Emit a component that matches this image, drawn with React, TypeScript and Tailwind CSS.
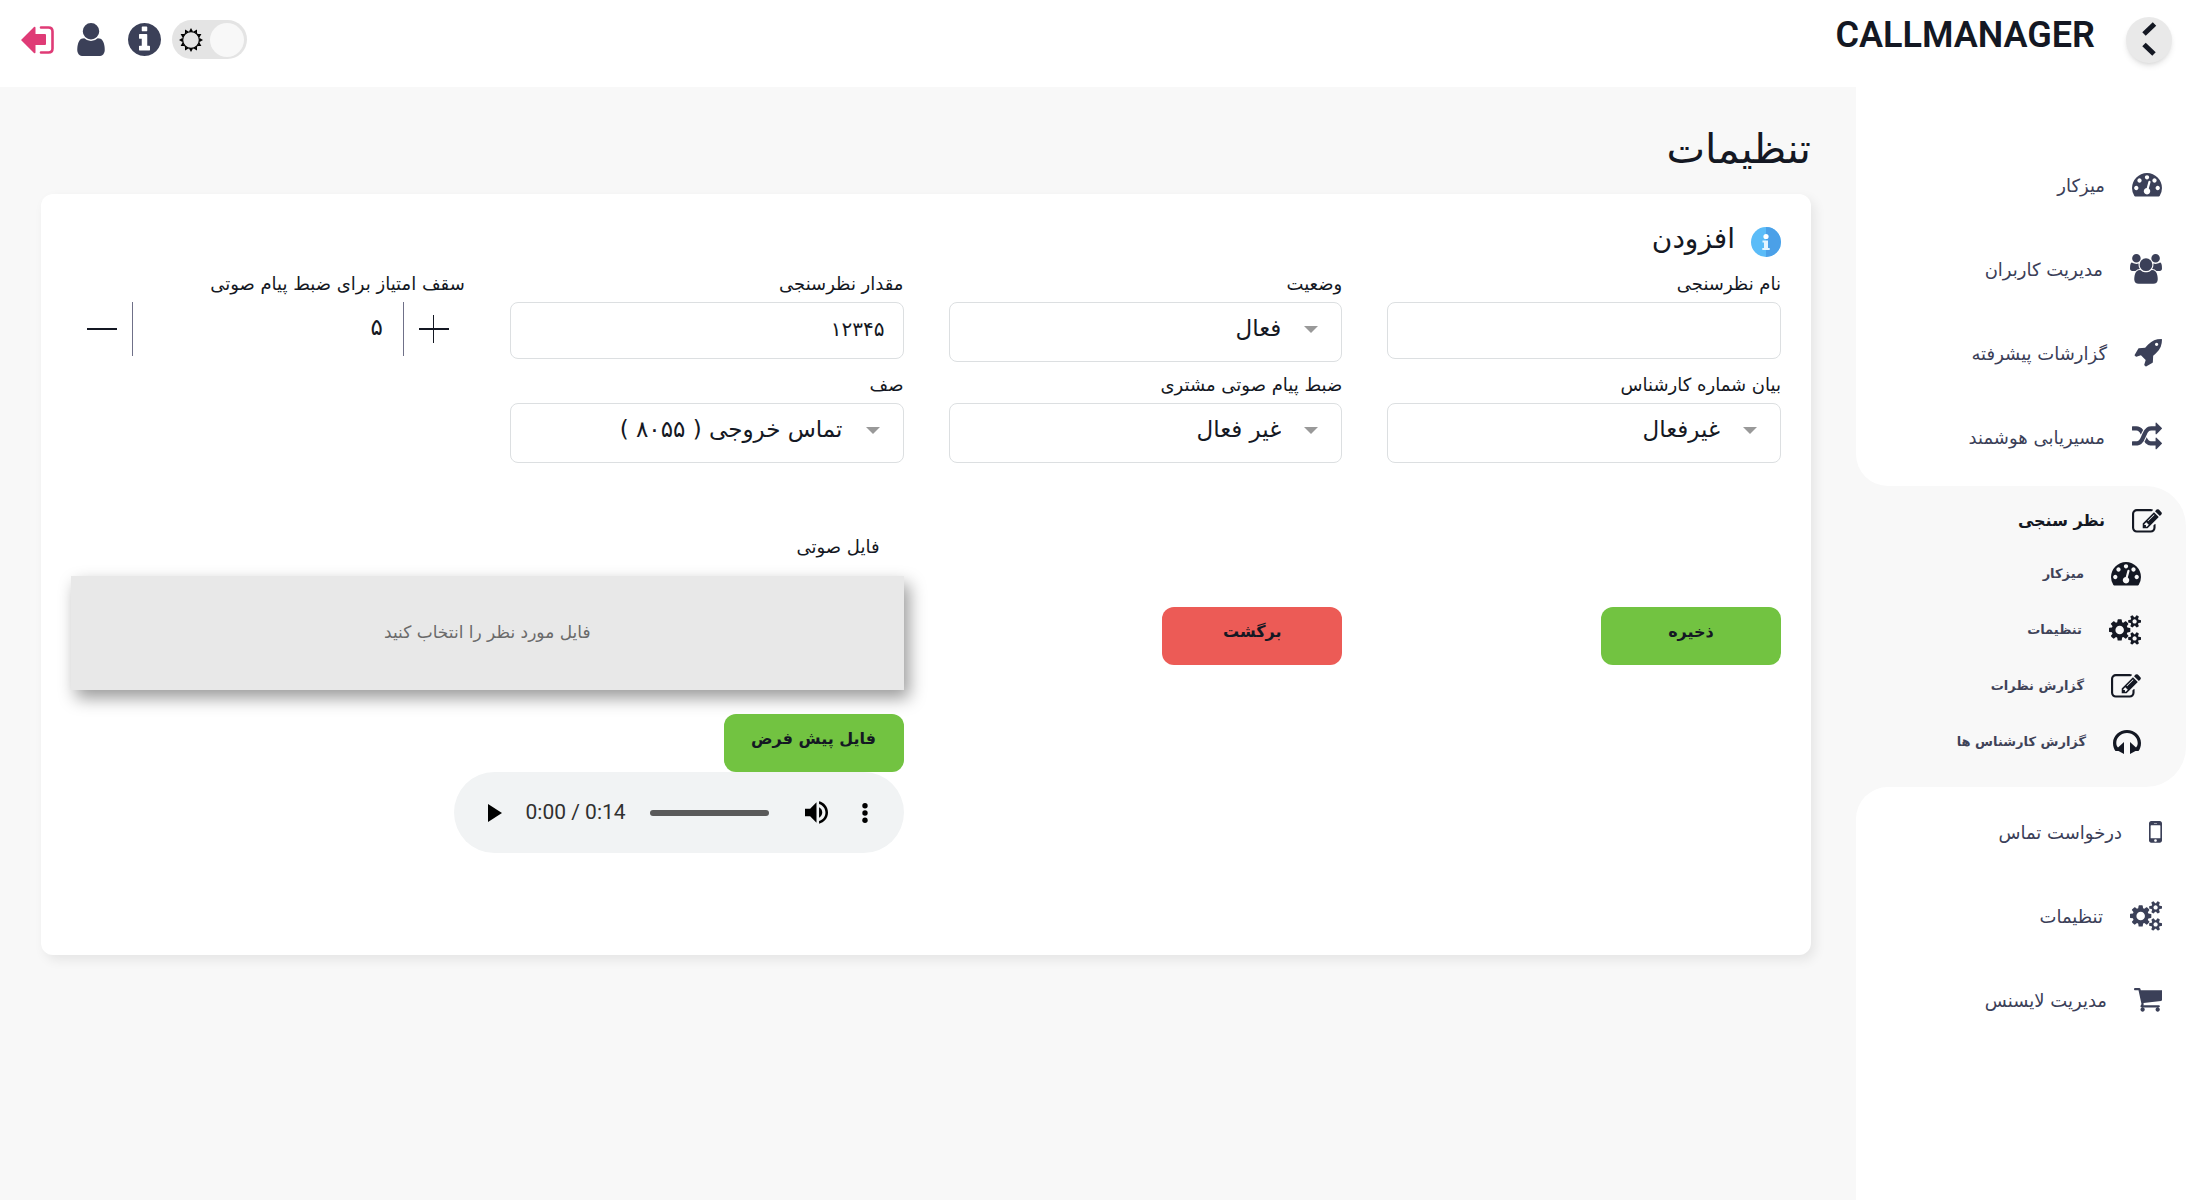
import { ReactNode, useState } from 'react';
import { clsx } from 'clsx';

type TIcon = { viewBox: string; d: string };

const icons = {
  dashboard: {
    viewBox: '0 256 1792 1408',
    d: 'M384 1152q0-53-37.5-90.5t-90.5-37.5-90.5 37.5-37.5 90.5 37.5 90.5 90.5 37.5 90.5-37.5 37.5-90.5zm192-448q0-53-37.5-90.5t-90.5-37.5-90.5 37.5-37.5 90.5 37.5 90.5 90.5 37.5 90.5-37.5 37.5-90.5zm428 481l101-382q6-26-7.5-48.5t-38.5-29.5-48 6.5-30 39.5l-101 382q-60 5-107 43.5t-63 98.5q-20 77 20 146t117 89 146-20 89-117q16-60-6-117t-72-91zm660-33q0-53-37.5-90.5t-90.5-37.5-90.5 37.5-37.5 90.5 37.5 90.5 90.5 37.5 90.5-37.5 37.5-90.5zm-640-640q0-53-37.5-90.5t-90.5-37.5-90.5 37.5-37.5 90.5 37.5 90.5 90.5 37.5 90.5-37.5 37.5-90.5zm448 192q0-53-37.5-90.5t-90.5-37.5-90.5 37.5-37.5 90.5 37.5 90.5 90.5 37.5 90.5-37.5 37.5-90.5zm320 448q0 261-141 483-19 29-54 29h-1402q-35 0-54-29-141-221-141-483 0-182 71-348t191-286 286-191 348-71 348 71 286 191 191 286 71 348z',
  },
  users: {
    viewBox: '-64 0 1920 1792',
    d: 'M529 896q-162 5-265 128h-134q-82 0-138-40.5t-56-118.5q0-353 124-353 6 0 43.5 21t97.5 42.5 119 21.5q67 0 133-23-5 37-5 66 0 139 81 256zm1071 637q0 120-73 189.5t-194 69.5h-874q-121 0-194-69.5t-73-189.5q0-53 3.5-103.5t14-109 26.5-108.5 43-97.5 62-81 85.5-53.5 111.5-20q10 0 43 21.5t73 48 107 48 135 21.5 135-21.5 107-48 73-48 43-21.5q61 0 111.5 20t85.5 53.5 62 81 43 97.5 26.5 108.5 14 109 3.5 103.5zm-1024-1277q0 106-75 181t-181 75-181-75-75-181 75-181 181-75 181 75 75 181zm704 384q0 159-112.5 271.5t-271.5 112.5-271.5-112.5-112.5-271.5 112.5-271.5 271.5-112.5 271.5 112.5 112.5 271.5zm576 225q0 78-56 118.5t-138 40.5h-134q-103-123-265-128 81-117 81-256 0-29-5-66 66 23 133 23 59 0 119-21.5t97.5-42.5 43.5-21q124 0 124 353zm-128-609q0 106-75 181t-181 75-181-75-75-181 75-181 181-75 181 75 75 181z',
  },
  rocket: {
    viewBox: '0 128 1664 1664',
    d: 'M1440 448q0-40-28-68t-68-28-68 28-28 68 28 68 68 28 68-28 28-68zm224-288q0 249-75.5 430.5t-253.5 360.5q-81 80-195 176l-20 379q-2 16-16 26l-384 224q-7 4-16 4-12 0-23-9l-64-64q-13-14-8-32l85-276-281-281-276 85q-3 1-9 1-14 0-23-9l-64-64q-17-19-5-39l224-384q10-14 26-16l379-20q96-114 176-195 188-187 358-258t431-71q14 0 24 9.5t10 22.5z',
  },
  random: {
    viewBox: '0 0 1792 1792',
    d: 'M666 481q-60 92-137 273-22-45-37-72.5t-40.5-63.5-51-56.5-63-35-81.5-14.5h-224q-14 0-23-9t-9-23v-192q0-14 9-23t23-9h224q250 0 410 225zm1126 799q0 14-9 23l-320 320q-9 9-23 9-13 0-22.5-9.5t-9.5-22.5v-192q-32 0-85 .5t-81 1-73-1-71-5-64-10.5-63-18.5-58-28.5-59-40-55-53.5-56-69.5q59-93 136-273 22 45 37 72.5t40.5 63.5 51 56.5 63 35 81.5 14.5h256v-192q0-14 9-23t23-9q12 0 24 10l319 319q9 9 9 23zm0-896q0 14-9 23l-320 320q-9 9-23 9-13 0-22.5-9.5t-9.5-22.5v-192h-256q-48 0-87 15t-69 45-51 61.5-45 77.5q-32 62-78 171-29 66-49.5 111t-54 105-64 100-74 83-90 68.5-106.5 42-128 16.5h-224q-14 0-23-9t-9-23v-192q0-14 9-23t23-9h224q48 0 87-15t69-45 51-61.5 45-77.5q32-62 78-171 29-66 49.5-111t54-105 64-100 74-83 90-68.5 106.5-42 128-16.5h256v-192q0-14 9-23t23-9q12 0 24 10l319 319q9 9 9 23z',
  },
  edit: {
    viewBox: '0 128 1792 1408',
    d: 'M888 1184l116-116-152-152-116 116v56h96v96h56zm440-720q-16-16-33 1l-350 350q-17 17-1 33t33-1l350-350q17-17 1-33zm80 594v190q0 119-84.5 203.5t-203.5 84.5h-832q-119 0-203.5-84.5t-84.5-203.5v-832q0-119 84.5-203.5t203.5-84.5h832q63 0 117 25 15 7 18 23 3 17-9 29l-49 49q-14 14-32 8-23-6-45-6h-832q-66 0-113 47t-47 113v832q0 66 47 113t113 47h832q66 0 113-47t47-113v-126q0-13 9-22l64-64q15-15 35-7t20 29zm-96-738l288 288-672 672h-288v-288zm444 132l-92 92-288-288 92-92q28-28 68-28t68 28l152 152q28 28 28 68t-28 68z',
  },
  cogs: {
    viewBox: '-64 0 1920 1792',
    d: 'M832 896q0-106-75-181t-181-75-181 75-75 181 75 181 181 75 181-75 75-181zm768 512q0-52-38-90t-90-38-90 38-38 90q0 53 37.5 90.5t90.5 37.5 90.5-37.5 37.5-90.5zm0-1024q0-52-38-90t-90-38-90 38-38 90q0 53 37.5 90.5t90.5 37.5 90.5-37.5 37.5-90.5zm-384 421v185q0 10-7 19.5t-16 10.5l-155 24q-11 35-32 76 34 48 90 115 7 11 7 20 0 12-7 19-23 30-82.5 89.5t-78.5 59.5q-11 0-21-7l-115-90q-37 19-77 31-11 108-23 155-7 24-30 24h-186q-11 0-20-7.5t-10-17.5l-23-153q-34-10-75-31l-118 89q-7 7-20 7-11 0-21-8-144-133-144-160 0-9 7-19 10-14 41-53t47-61q-23-44-35-82l-152-24q-10-1-17-9.5t-7-19.5v-185q0-10 7-19.5t16-10.5l155-24q11-35 32-76-34-48-90-115-7-11-7-20 0-12 7-20 22-30 82-89t79-59q11 0 21 7l115 90q34-18 77-32 11-108 23-154 7-24 30-24h186q11 0 20 7.5t10 17.5l23 153q34 10 75 31l118-89q8-7 20-7 11 0 21 8 144 133 144 160 0 8-7 19-12 16-42 54t-45 60q23 48 34 82l152 23q10 2 17 10.5t7 19.5zm640 533v140q0 16-149 31-12 27-30 52 51 113 51 138 0 4-4 7-122 71-124 71-8 0-46-47t-52-68q-20 2-30 2t-30-2q-14 21-52 68t-46 47q-2 0-124-71-4-3-4-7 0-25 51-138-18-25-30-52-149-15-149-31v-140q0-16 149-31 13-29 30-52-51-113-51-138 0-4 4-7 4-2 35-20t59-34 30-16q8 0 46 46.5t52 67.5q20-2 30-2t30 2q51-71 92-112l6-2q4 0 124 70 4 3 4 7 0 25-51 138 17 23 30 52 149 15 149 31zm0-1024v140q0 16-149 31-12 27-30 52 51 113 51 138 0 4-4 7-122 71-124 71-8 0-46-47t-52-68q-20 2-30 2t-30-2q-14 21-52 68t-46 47q-2 0-124-71-4-3-4-7 0-25 51-138-18-25-30-52-149-15-149-31v-140q0-16 149-31 13-29 30-52-51-113-51-138 0-4 4-7 4-2 35-20t59-34 30-16q8 0 46 46.5t52 67.5q20-2 30-2t30 2q51-71 92-112l6-2q4 0 124 70 4 3 4 7 0 25-51 138 17 23 30 52 149 15 149 31z',
  },
  headphones: {
    viewBox: '0 0 28 24',
    d: 'M14 0C6.300 0 0 5.800 0 13C0 16.500 1 19 2.500 21H5.500L11 24V12L5 17.500C3.800 16.500 3.300 14.500 3.300 13C3.300 7.500 8 3 14 3S24.700 7.500 24.700 13C24.700 14.500 24.200 16.500 23 17.500L17 12V24L22.500 21H25.500C27 19 28 16.500 28 13C28 5.800 21.700 0 14 0z',
  },
  mobile: {
    viewBox: '512 256 768 1280',
    d: 'M976 1408q0-33-23.5-56.5t-56.5-23.5-56.5 23.5-23.5 56.5 23.5 56.5 56.5 23.5 56.5-23.5 23.5-56.5zm208-160v-704q0-13-9.5-22.5t-22.5-9.5h-512q-13 0-22.5 9.5t-9.5 22.5v704q0 13 9.5 22.5t22.5 9.5h512q13 0 22.5-9.5t9.5-22.5zm-192-848q0-16-16-16h-160q-16 0-16 16t16 16h160q16 0 16-16zm288-16v1024q0 52-38 90t-90 38h-512q-52 0-90-38t-38-90v-1024q0-52 38-90t90-38h512q52 0 90 38t38 90z',
  },
  cart: {
    viewBox: '64 256 1664 1408',
    d: 'M704 1536q0 52-38 90t-90 38-90-38-38-90 38-90 90-38 90 38 38 90zm896 0q0 52-38 90t-90 38-90-38-38-90 38-90 90-38 90 38 38 90zm128-1144v576q0 20-16 38t-41 21l-1044 122q13 60 13 70 0 16-24 64h920q26 0 45 19t19 45-19 45-45 19h-1024q-26 0-45-19t-19-45q0-11 8-31.500t16-36 21.500-40 15.500-29.500l-177-823h-204q-26 0-45-19t-19-45 19-45 45-19h256q16 0 28.500 6.500t19.500 15.500 13 24.500 8 26 5.500 29.500 4.500 26h1240q24 0 24 -16z',
  },
  user: {
    viewBox: '256 128 1280 1536',
    d: 'M1536 1399q0 109-62.500 187t-150.500 78h-854q-88 0-150.500-78t-62.500-187q0-85 8.500-160.500t31.500-152 58.500-131 94-89 134.500-34.500q131 128 313 128t313-128q76 0 134.500 34.500t94 89 58.500 131 31.500 152 8.500 160.500zm-256-887q0 159-112.500 271.500t-271.500 112.500-271.500-112.500-112.500-271.500 112.500-271.500 271.500-112.500 271.500 112.500 112.500 271.500z',
  },
  info: {
    viewBox: '128 128 1536 1536',
    d: 'M1152 1376v-160q0-14-9-23t-23-9h-96v-512q0-14-9-23t-23-9h-320q-14 0-23 9t-9 23v160q0 14 9 23t23 9h96v320h-96q-14 0-23 9t-9 23v160q0 14 9 23t23 9h448q14 0 23-9t9-23zm-128-896v-160q0-14-9-23t-23-9h-192q-14 0-23 9t-9 23v160q0 14 9 23t23 9h192q14 0 23-9t9-23zm640 416q0 209-103 385.500t-279.500 279.500-385.500 103-385.500-103-279.500-279.500-103-385.500 103-385.500 279.500-279.500 385.500-103 385.500 103 279.500 279.500 103 385.500z',
  },
} satisfies Record<string, TIcon>;

type TIconName = keyof typeof icons;

const Icon = ({ name, className }: { name: TIconName; className: string }) => (
  <svg
    viewBox={icons[name].viewBox}
    fill="currentColor"
    aria-hidden="true"
    className={clsx('shrink-0', className)}
  >
    <path d={icons[name].d} />
  </svg>
);

type TNavItem = { icon: TIconName; label: string; size: string };

const topNav: TNavItem[] = [
  { icon: 'dashboard', label: 'میزکار', size: 'w-[30px]' },
  { icon: 'users', label: 'مدیریت کاربران', size: 'w-[32px]' },
  { icon: 'rocket', label: 'گزارشات پیشرفته', size: 'w-[28px]' },
  { icon: 'random', label: 'مسیریابی هوشمند', size: 'w-[30px]' },
];

const surveyNav: TNavItem[] = [
  { icon: 'dashboard', label: 'میزکار', size: 'w-[30px]' },
  { icon: 'cogs', label: 'تنظیمات', size: 'w-[32px]' },
  { icon: 'edit', label: 'گزارش نظرات', size: 'w-[30px]' },
  { icon: 'headphones', label: 'گزارش کارشناس ها', size: 'w-[28px]' },
];

const bottomNav: TNavItem[] = [
  { icon: 'mobile', label: 'درخواست تماس', size: 'w-[13px]' },
  { icon: 'cogs', label: 'تنظیمات', size: 'w-[32px]' },
  { icon: 'cart', label: 'مدیریت لایسنس', size: 'w-[28px]' },
];

const NavLink = ({ icon, label, size }: TNavItem) => (
  <a
    href="#"
    className="flex h-[84px] items-center gap-[27px] pr-[35px] text-[18px] text-[#3b4058]"
  >
    <Icon name={icon} className={size} />
    {label}
  </a>
);

const Sidebar = () => (
  <aside className="flex w-[341px] shrink-0 flex-col">
    <nav className="flex flex-1 flex-col">
      <div className="rounded-bl-[32px] bg-white pt-[56px] pb-[7px]">
        {topNav.map((item) => (
          <NavLink key={item.label} {...item} />
        ))}
      </div>

      {/* Open section */}
      <div className="bg-white pr-[11px]">
        <div className="rounded-r-[40px] bg-[#f8f8f8] pt-[10px] pb-[17px]">
          <a
            href="#"
            className="flex h-[50px] items-center gap-[27px] pr-6 text-[16px] font-bold text-[#141823]"
          >
            <Icon name="edit" className="w-[30px]" />
            نظر سنجی
          </a>
          {surveyNav.map(({ icon, label, size }) => (
            <a
              key={label}
              href="#"
              className="flex h-14 items-center gap-[27px] pr-[45px] text-[13px] font-bold text-[#3f4358]"
            >
              <Icon name={icon} className={clsx(size, 'text-[#141823]')} />
              {label}
            </a>
          ))}
        </div>
      </div>

      <div className="flex-1 rounded-tl-[32px] bg-white pt-[3px]">
        {bottomNav.map((item) => (
          <NavLink key={item.label} {...item} />
        ))}
      </div>
    </nav>
  </aside>
);

const Header = () => {
  const [dark, setDark] = useState(false);

  return (
    <header className="flex h-[87px] items-start justify-between bg-white pt-[17px] pr-[25px] pl-[21px]">
      <div className="flex items-start gap-[31px]">
        <button
          aria-label="منو"
          className="flex size-[46px] items-center justify-center rounded-full bg-[#e9e9e9] shadow-md"
        >
          <svg viewBox="0 0 46 46" className="size-[46px]" fill="none" stroke="#141823" strokeWidth="5">
            <path d="M28.500 7L18 17M18 27.500L28 37" />
          </svg>
        </button>
        <h1 className="font-[Roboto,sans-serif] text-[36px] leading-9 font-semibold text-[#141823]" dir="ltr">
          CALLMANAGER
        </h1>
      </div>

      {/* Actions */}
      <div className="flex items-center pt-[3px] text-[#3b4058]" dir="ltr">
        <button aria-label="خروج" className="mr-[22px] text-[#df3b76]">
          <svg viewBox="0 0 33 28" className="h-7 w-[33px]" aria-hidden="true">
            <path d="M0 14L13 1Q14.500 0 14.500 2V8H24Q25 8 25 9V18Q25 19 24 19H14.500V26Q14.500 28 13 27z" fill="currentColor" />
            <path d="M20 1.500H27.500Q31.500 1.500 31.500 5.500V22.500Q31.500 26.500 27.500 26.500H20" fill="none" stroke="currentColor" strokeWidth="2.600" strokeLinecap="round" />
          </svg>
        </button>
        <button aria-label="کاربر" className="mr-[22px]">
          <Icon name="user" className="h-[33px] w-[30px]" />
        </button>
        <button aria-label="راهنما" className="mr-[11px]">
          <Icon name="info" className="size-[33px]" />
        </button>
        <label className="flex h-[39px] w-[75px] cursor-pointer items-center justify-between rounded-full bg-[#e4e4e4] pr-[3px] pl-[7px]">
          <input
            type="checkbox"
            className="sr-only"
            aria-label="حالت شب"
            checked={dark}
            onChange={() => setDark(!dark)}
          />
          <svg viewBox="-12 -12 24 24" className="size-6 text-black" aria-hidden="true">
            <circle r="8.400" fill="none" stroke="currentColor" strokeWidth="1.300" />
            {Array.from({ length: 12 }, (_, i) => (
              <path key={i} d="M-2-8.600L0-12L2-8.600z" fill="currentColor" transform={`rotate(${i * 30})`} />
            ))}
          </svg>
          <span className="size-[34px] rounded-full bg-[#f8f8f8]" />
        </label>
      </div>
    </header>
  );
};

type TField = { id: string; label: string; children: ReactNode };

const Field = ({ id, label, children }: TField) => (
  <div>
    <label htmlFor={id} className="block h-[33px] text-[18px] leading-[30px]">
      {label}
    </label>
    {children}
  </div>
);

const SelectField = ({ id, label, options }: { id: string; label: string; options: string[] }) => (
  <Field id={id} label={label}>
    <div className="relative">
      <select
        id={id}
        className="h-[60px] w-full appearance-none rounded-lg border border-[#dcdfe1] bg-white pr-[60px] pb-2 pl-4 text-[23px]"
      >
        {options.map((option) => (
          <option key={option}>{option}</option>
        ))}
      </select>
      <span className="pointer-events-none absolute top-6 right-6 border-x-[7px] border-t-[7px] border-x-transparent border-t-[#999]" />
    </div>
  </Field>
);

const button =
  'h-[58px] w-[180px] rounded-xl pb-2 text-[16px] font-bold text-[#141823]';

const AudioPlayer = () => (
  <div className="flex h-[81px] w-[450px] items-center rounded-full bg-[#f1f3f4] pr-9 pl-[34px] text-black" dir="ltr">
    <button aria-label="پخش" className="mr-6">
      <svg viewBox="0 0 14 18" className="h-[18px] w-[14px]">
        <path d="M0 0L14 9L0 18z" />
      </svg>
    </button>
    <span className="font-[Roboto,sans-serif] text-[21px] whitespace-nowrap text-[#303030]">0:00 / 0:14</span>
    <input
      type="range"
      aria-label="زمان"
      defaultValue={0}
      className="mx-6 h-[6px] min-w-0 flex-1 appearance-none rounded-full bg-[#5a5a5a] [&::-webkit-slider-thumb]:appearance-none"
    />
    <button aria-label="صدا" className="mr-[34px] ml-3">
      <svg viewBox="3 3 18 18" className="size-[23px]">
        <path d="M3 9v6h4l5 5V4L7 9H3zm13.500 3c0-1.770-1.020-3.290-2.500-4.030v8.050c1.480-.730 2.500-2.250 2.500-4.020zM14 3.230v2.060c2.890.860 5 3.540 5 6.710s-2.110 5.850-5 6.710v2.060c4.010-.910 7-4.490 7-8.770s-2.990-7.860-7-8.770z" />
      </svg>
    </button>
    <button aria-label="بیشتر">
      <svg viewBox="0 0 6 20" className="h-5 w-[6px]">
        <circle cx="3" cy="2.800" r="2.700" />
        <circle cx="3" cy="10" r="2.700" />
        <circle cx="3" cy="17.200" r="2.700" />
      </svg>
    </button>
  </div>
);

const SurveyForm = () => {
  const [name, setName] = useState('');
  const [value, setValue] = useState('۱۲۳۴۵');
  const [limit, setLimit] = useState(5);

  return (
    <form className="rounded-xl bg-white px-[30px] pt-6 pb-[102px] shadow-[4px_5px_12px_rgba(0,0,0,0.08)]">
      <div className="flex h-[51px] items-start gap-4">
        <svg viewBox="0 0 30 30" className="mt-[9px] size-[30px]" aria-hidden="true">
          <circle cx="15" cy="15" r="15" fill="#5bbcf8" />
          <path d="M15 0a15 15 0 0 1 0 30z" fill="#4ba0e8" />
          <circle cx="15" cy="9.500" r="2.600" fill="#fff" />
          <path d="M11.500 13.500h5.500v7.500h1.700v2h-7.400v-2h1.700v-5.500h-1.500z" fill="#e6f5ff" />
        </svg>
        <h3 className="text-[28px] leading-[42px]">افزودن</h3>
      </div>

      {/* Fields */}
      <div className="grid grid-cols-4 gap-x-[45px] gap-y-2">
        <Field id="name" label="نام نظرسنجی">
          <input
            id="name"
            value={name}
            onChange={(e) => setName(e.target.value)}
            className="h-[57px] w-full rounded-lg border border-[#dcdfe1] px-[18px] text-[20px]"
          />
        </Field>
        <SelectField id="status" label="وضعیت" options={['فعال', 'غیر فعال']} />
        <Field id="value" label="مقدار نظرسنجی">
          <input
            id="value"
            value={value}
            onChange={(e) => setValue(e.target.value)}
            className="h-[57px] w-full rounded-lg border border-[#dcdfe1] px-[18px] pb-1 text-[20px]"
          />
        </Field>
        <Field id="limit" label="سقف امتیاز برای ضبط پیام صوتی">
          <div className="flex h-[54px] items-center">
            <button type="button" aria-label="افزایش" onClick={() => setLimit(limit + 1)} className="flex w-[61px] justify-center">
              <svg viewBox="0 0 30 30" className="size-[30px]" stroke="#141823">
                <path d="M0 15H30" strokeWidth="2" />
                <path d="M14.500 1V29" />
              </svg>
            </button>
            <input
              id="limit"
              value={limit.toLocaleString('fa-IR')}
              readOnly
              className="h-[54px] min-w-0 flex-1 border-x border-[#6f7088] px-5 pb-1 text-[23px]"
            />
            <button type="button" aria-label="کاهش" onClick={() => setLimit(limit - 1)} className="flex w-[61px] justify-center">
              <svg viewBox="0 0 30 30" className="size-[30px]" stroke="#141823">
                <path d="M0 15H30" strokeWidth="2" />
              </svg>
            </button>
          </div>
        </Field>
        <SelectField id="expert" label="بیان شماره کارشناس" options={['غیرفعال', 'فعال']} />
        <SelectField id="voice" label="ضبط پیام صوتی مشتری" options={['غیر فعال', 'فعال']} />
        <SelectField id="queue" label="صف" options={['تماس خروجی ( ۸۰۵۵ )']} />
      </div>

      {/* Actions and audio file */}
      <div className="mt-[66px] grid grid-cols-4 gap-x-[45px]">
        <div className="pt-[78px]">
          <button type="submit" className={clsx(button, 'bg-[#72c341]')}>
            ذخیره
          </button>
        </div>
        <div className="pt-[78px]">
          <button type="button" className={clsx(button, 'bg-[#ec5b56]')}>
            برگشت
          </button>
        </div>
        <div className="col-span-2">
          <label htmlFor="file" className="block h-[47px] pr-6 text-[18px] leading-9">
            فایل صوتی
          </label>
          <label
            htmlFor="file"
            className="flex h-[114px] cursor-pointer items-center justify-center bg-[#e8e8e8] text-[17px] text-[#6a6a6a] shadow-[5px_8px_16px_rgba(0,0,0,0.4)]"
          >
            فایل مورد نظر را انتخاب کنید
            <input id="file" type="file" className="sr-only" />
          </label>
          <button type="button" className={clsx(button, 'mt-6 block bg-[#72c341]')}>
            فایل پیش فرض
          </button>
          <AudioPlayer />
        </div>
      </div>
    </form>
  );
};

const App = () => (
  <div
    dir="rtl"
    className="flex min-h-screen flex-col bg-[#f8f8f8] font-['DejaVu_Sans',sans-serif] text-[#141823]"
  >
    <Header />
    <div className="flex flex-1">
      <Sidebar />
      <main className="min-w-0 flex-1 pt-8 pr-[45px] pl-[41px]">
        <h2 className="h-[75px] text-[41px] leading-[60px]">تنظیمات</h2>
        <SurveyForm />
      </main>
    </div>
  </div>
);

export default App;
